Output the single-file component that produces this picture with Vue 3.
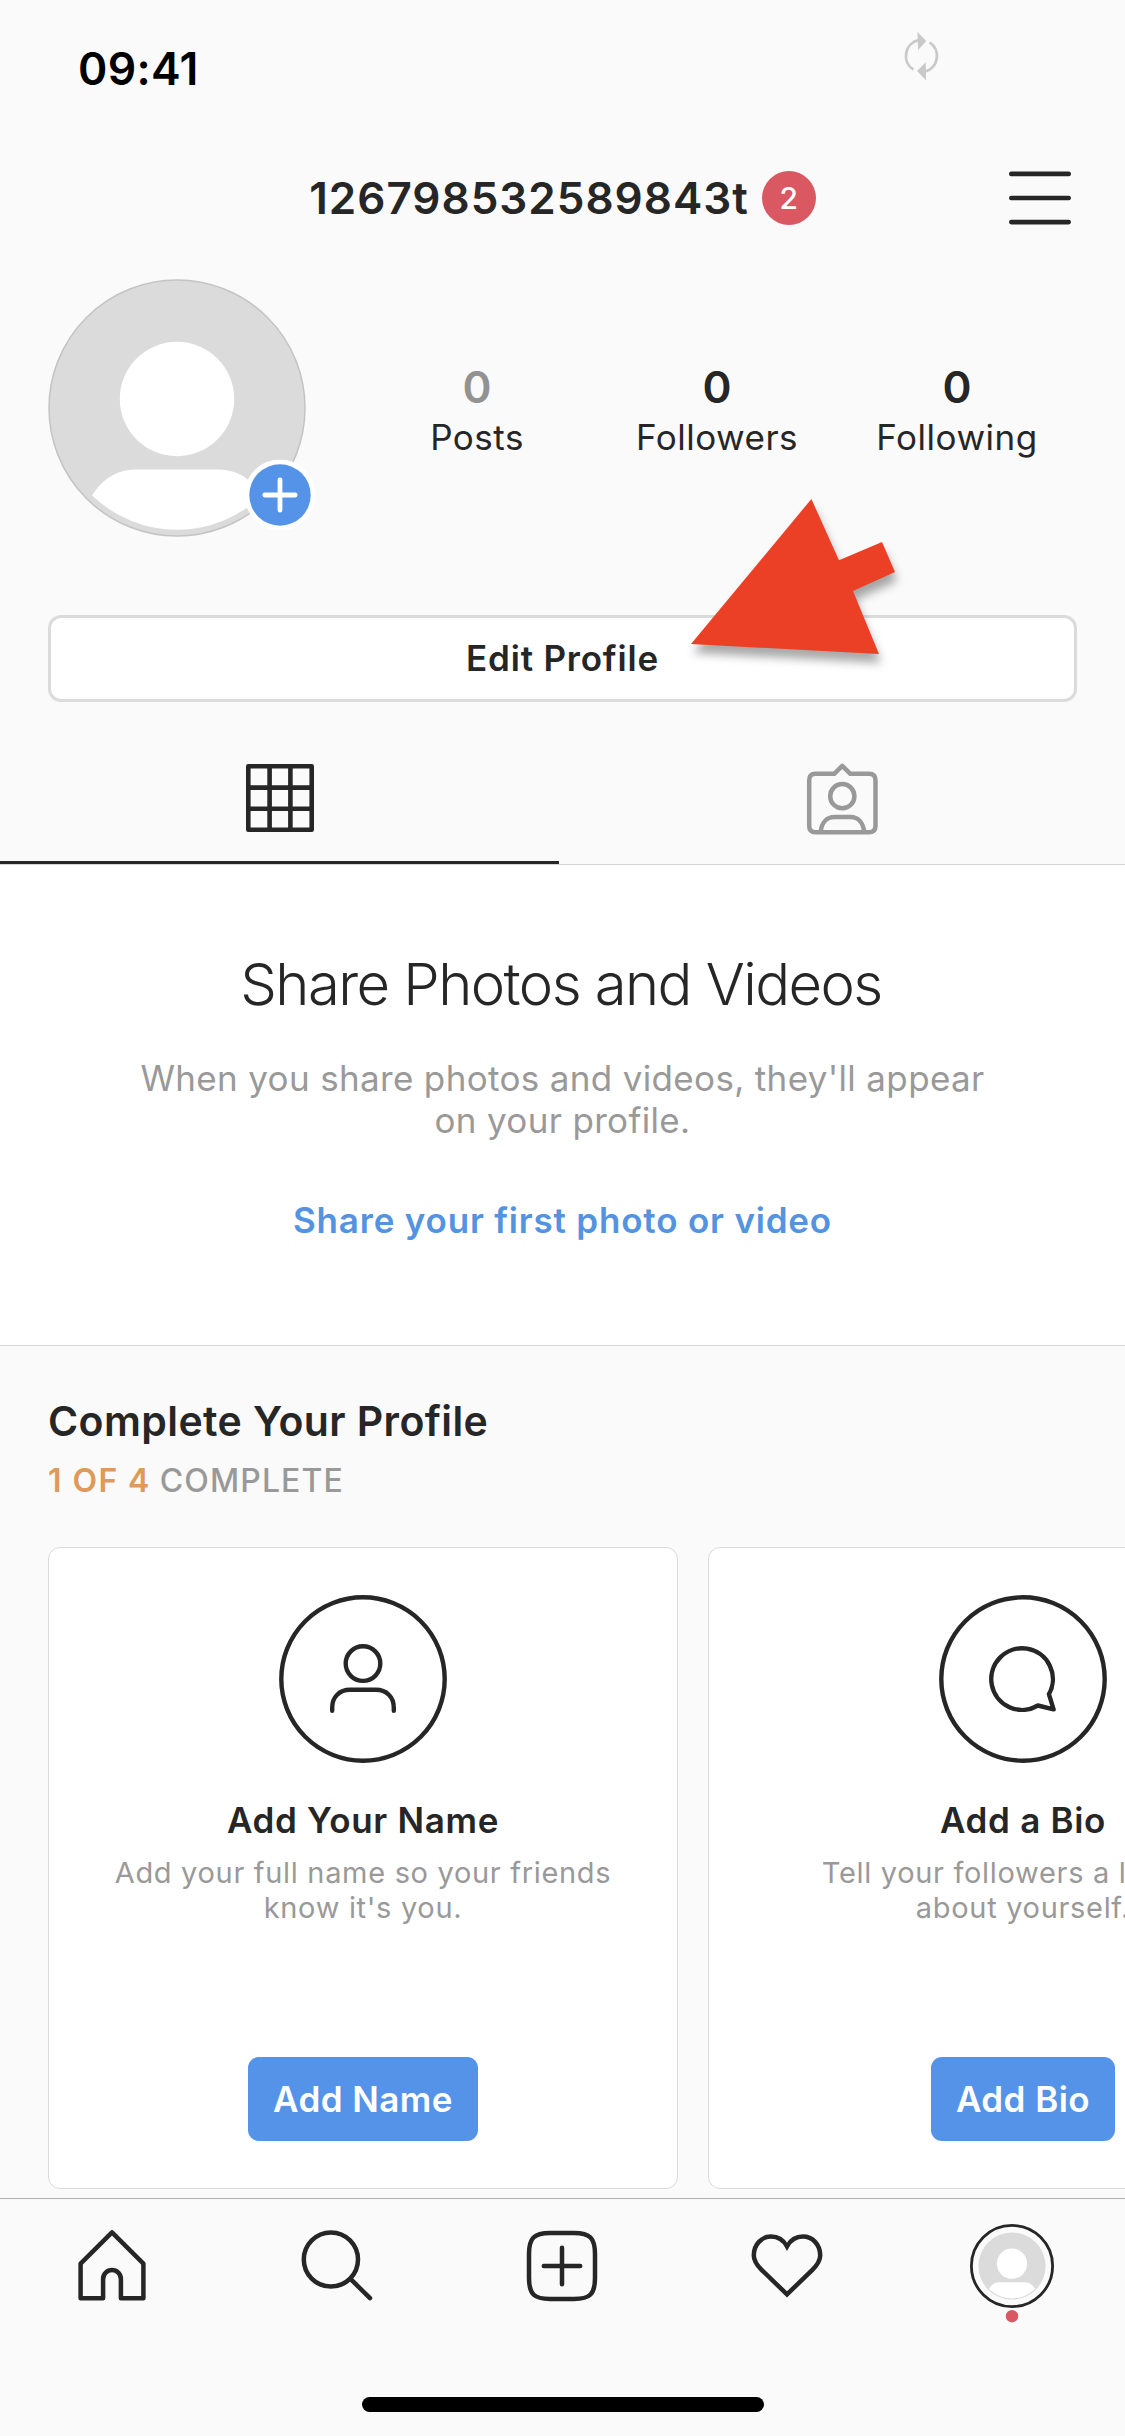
<script setup>
const stats = [
  { label: 'Posts', value: 0, muted: true },
  { label: 'Followers', value: 0 },
  { label: 'Following', value: 0 }
]

const cards = [
  {
    icon: 'person',
    title: 'Add Your Name',
    lines: ['Add your full name so your friends', "know it's you."],
    action: 'Add Name'
  },
  {
    icon: 'bubble',
    title: 'Add a Bio',
    lines: ['Tell your followers a little bit', 'about yourself.'],
    action: 'Add Bio'
  }
]
</script>

<template>
  <div class="screen">
    <div class="status">
      <span class="time">09:41</span>
      <svg class="sync" width="40" height="52" viewBox="902 30 40 52">
        <path d="M913.3 69.6A16.2 16.2 0 0 1 918.6 40.2M929.6 42.4A16.2 16.2 0 0 1 925 71.6" fill="none" stroke="#c9c9c9" stroke-width="2.8" />
        <path d="M917.4 32L926.3 41L918.2 50ZM926 80.2L917 71L925.8 62.2Z" fill="#c9c9c9" />
      </svg>
    </div>

    <header class="header">
      <div class="account">
        <span class="username">126798532589843t</span>
        <span class="count">2</span>
      </div>
      <svg class="menu" width="62" height="54" viewBox="0 0 62 54">
        <path d="M2.3 2.9H59.7M2.3 27H59.7M2.3 51.1H59.7" fill="none" stroke="#262626" stroke-width="4.6" stroke-linecap="round" />
      </svg>
    </header>

    <section class="profile">
      <div class="avatar">
        <svg width="258" height="258" viewBox="48 279 258 258">
          <defs>
            <clipPath id="avatar-clip"><circle cx="177" cy="408" r="121.8" /></clipPath>
          </defs>
          <circle cx="177" cy="408" r="128" fill="#dbdbdb" stroke="#c4c4c4" stroke-width="1.5" />
          <circle cx="177" cy="399" r="57.2" fill="#fff" />
          <path d="M84 510C96 484 112 469.5 136 469.5H218C242 469.5 258 484 270 510V540H84Z" fill="#fff" clip-path="url(#avatar-clip)" />
        </svg>
        <svg class="add" width="72" height="72" viewBox="-36 -36 72 72">
          <circle r="35.6" fill="#fff" />
          <circle r="30.7" fill="#5493e8" />
          <path d="M-15.2 0H15.2M0 -15.2V15.2" stroke="#fff" stroke-width="4.8" stroke-linecap="round" />
        </svg>
      </div>
      <div class="stats">
        <div v-for="s in stats" :key="s.label" class="stat">
          <span class="value" :class="{ muted: s.muted }">{{ s.value }}</span>
          <span class="label">{{ s.label }}</span>
        </div>
      </div>
    </section>

    <div class="edit-wrap">
      <button class="edit">Edit Profile</button>
      <svg class="arrow" width="244" height="200" viewBox="671 479 244 200">
        <path d="M811.4 499L839 560.3L882 542L895 572L853 591L879 654L691 644Z" fill="#eb4026" />
      </svg>
    </div>

    <nav class="tabs">
      <div class="tab active">
        <svg width="68" height="68" viewBox="0 0 68 68">
          <path d="M2.3 2.3H65.7V65.7H2.3ZM23.6 2V66M44.4 2V66M2 23.6H66M2 44.8H66" fill="none" stroke="#262626" stroke-width="4.6" stroke-linejoin="round" />
        </svg>
      </div>
      <div class="tab">
        <svg class="tag" width="72" height="72" viewBox="806 762 72 72">
          <g fill="none" stroke="#999" stroke-width="4.5" stroke-linejoin="round">
            <path d="M815.5 772.8H834.2L842.3 764.8L850.4 772.8H869Q875.5 772.8 875.5 779.3V824.7Q875.5 831.2 869 831.2H815.5Q809.2 831.2 809.2 824.7V779.3Q809.2 772.8 815.5 772.8Z" />
            <circle cx="842.3" cy="795.2" r="12.1" />
            <path d="M820.6 831C821.6 821.5 827 816 834.5 816H850.5C858 816 863.2 821.5 864.2 831" />
          </g>
        </svg>
      </div>
    </nav>

    <section class="empty">
      <h1>Share Photos and Videos</h1>
      <p>When you share photos and videos, they'll appear<br />on your profile.</p>
      <a>Share your first photo or video</a>
    </section>

    <section class="complete">
      <h2>Complete Your Profile</h2>
      <div class="progress"><b>1 OF 4</b><span>COMPLETE</span></div>
      <div class="cards">
        <article v-for="c in cards" :key="c.icon" class="card">
          <svg class="badge" width="168" height="168" viewBox="-84 -84 168 168">
            <g fill="none" stroke="#262626" stroke-width="4.4" stroke-linecap="round" stroke-linejoin="round">
              <circle r="81.7" />
              <template v-if="c.icon === 'person'">
                <circle cy="-15.4" r="17.3" />
                <path d="M-30.8 31.8V28.5C-30.8 18 -23.5 10.8 -13 10.8H13C23.5 10.8 30.8 18 30.8 28.5V31.8" />
              </template>
              <path v-else d="M14.9 26.5A30.8 30.8 0 1 1 25.9 15.2L30.6 30.4Z" />
            </g>
          </svg>
          <h3>{{ c.title }}</h3>
          <p><span v-for="l in c.lines" :key="l">{{ l }}</span></p>
          <button>{{ c.action }}</button>
        </article>
      </div>
    </section>

    <footer class="dock">
      <div class="dock-row">
        <div class="dock-item">
          <svg width="84" height="84" viewBox="-42 -42 84 84">
            <path d="M0 -33.6L31.4 -2.3V32.2H8.9V13A8.9 8.9 0 0 0 -8.9 13V32.2H-31.4V-2.3Z" />
          </svg>
        </div>
        <div class="dock-item">
          <svg width="84" height="84" viewBox="-42 -42 84 84">
            <circle cx="-6.1" cy="-6.5" r="27.1" />
            <path d="M14 13.4L33 32.2" />
          </svg>
        </div>
        <div class="dock-item">
          <svg width="84" height="84" viewBox="-42 -42 84 84">
            <path d="M-33 -12C-33 -28 -28 -33 -12 -33H12C28 -33 33 -28 33 -12V12C33 28 28 33 12 33H-12C-28 33 -33 28 -33 12Z" />
            <path d="M-18.2 0H18.2M0 -18.2V18.2" />
          </svg>
        </div>
        <div class="dock-item">
          <svg width="84" height="84" viewBox="-42 -42 84 84">
            <path stroke-linejoin="miter" d="M0 28.4L-25.4 3.8C-30.6 -1.4 -33.2 -5.2 -33.2 -10.6C-33.2 -21.6 -25.4 -29.4 -15.9 -29.4C-8.6 -29.4 -3.5 -25.8 0 -19.6C3.5 -25.8 8.6 -29.4 15.9 -29.4C25.4 -29.4 33.2 -21.6 33.2 -10.6C33.2 -5.2 30.6 -1.4 25.4 3.8Z" />
          </svg>
        </div>
        <div class="dock-item">
          <svg class="me" width="86" height="100" viewBox="-43 -43 86 100">
            <defs>
              <clipPath id="me-clip"><circle r="32.4" /></clipPath>
            </defs>
            <circle r="40.6" stroke="#262626" stroke-width="2.8" fill="#fafafa" />
            <circle r="33.6" fill="#dbdbdb" />
            <circle cy="-2.3" r="15.1" fill="#fff" />
            <path d="M-25 26C-21 19 -18 16.3 -12 16.3H12C18 16.3 21 19 25 26V40H-25Z" fill="#fff" clip-path="url(#me-clip)" />
            <circle cy="50.2" r="6.2" fill="#d95861" />
          </svg>
        </div>
      </div>
      <div class="home-bar"></div>
    </footer>
  </div>
</template>

<style>
html,
body {
  margin: 0;
  background: #fafafa;
}
</style>

<style scoped>
.screen {
  width: 1125px;
  height: 2436px;
  overflow: hidden;
  display: flex;
  flex-direction: column;
  background: #fafafa;
  color: #262626;
  font-family: Inter, "Liberation Sans", sans-serif;
}

h1, h2, h3, p {
  margin: 0;
}

button {
  font-family: inherit;
  padding: 0;
}

svg {
  display: block;
}

.status {
  height: 136px;
  display: flex;
  justify-content: space-between;
  padding: 0 183px 0 78px;
  box-sizing: border-box;
}

.time {
  margin-top: 42px;
  font-size: 44.5px;
  line-height: 54px;
  font-weight: 600;
  letter-spacing: 0.3px;
  color: #000;
}

.sync {
  margin-top: 30px;
}

.header {
  height: 124px;
  display: grid;
  grid-template-columns: 1fr auto 1fr;
  align-items: center;
  padding: 0 54px;
}

.account {
  grid-column: 2;
  display: flex;
  align-items: center;
  gap: 13px;
}

.username {
  font-size: 44px;
  line-height: 54px;
  font-weight: 600;
  letter-spacing: 1px;
}

.count {
  width: 54px;
  height: 54px;
  border-radius: 50%;
  background: #d95861;
  color: #fff;
  font-size: 30px;
  line-height: 54px;
  font-weight: 500;
  text-align: center;
}

.menu {
  justify-self: end;
  margin-top: -1px;
}

.profile {
  display: flex;
  justify-content: space-between;
  align-items: flex-start;
  height: 336px;
  padding: 19px 48px 0;
}

.avatar {
  position: relative;
}

.add {
  position: absolute;
  left: 195.5px;
  top: 179.5px;
}

.stats {
  display: grid;
  grid-template-columns: repeat(3, 240px);
  padding-top: 82px;
}

.stat {
  display: flex;
  flex-direction: column;
  align-items: center;
  gap: 4px;
}

.value {
  font-size: 44px;
  line-height: 52px;
  font-weight: 600;
}

.muted {
  color: #929292;
}

.label {
  font-size: 35px;
  line-height: 40px;
  letter-spacing: 0.5px;
}

.edit-wrap {
  position: relative;
  padding: 0 48px;
}

.edit {
  display: block;
  width: 100%;
  height: 87px;
  padding-bottom: 2px;
  border: 3px solid #dbdbdb;
  border-radius: 13px;
  background: #fff;
  color: #262626;
  font-size: 35px;
  font-weight: 600;
  letter-spacing: 0.8px;
}

.arrow {
  position: absolute;
  left: 671px;
  top: -136px;
  filter: drop-shadow(2px 9px 5px rgba(0, 0, 0, 0.34));
}

.tabs {
  display: grid;
  grid-template-columns: 559px 1fr;
  margin-top: 30px;
  height: 132px;
  border-bottom: 1px solid #d4d4d4;
}

.tab {
  display: flex;
  justify-content: center;
  align-items: center;
}

.tag {
  margin-top: 2px;
}

.tab.active {
  box-shadow: inset 0 -3px #262626;
}

.empty {
  height: 481px;
  flex: none;
  box-sizing: border-box;
  padding-top: 84px;
  background: #fff;
  border-bottom: 1px solid #d8d8d8;
  display: flex;
  flex-direction: column;
  align-items: center;
  text-align: center;
}

.empty h1 {
  font-size: 58px;
  line-height: 70px;
  font-weight: 300;
  letter-spacing: -1.57px;
  padding-right: 3px;
}

.empty p {
  margin-top: 38px;
  font-size: 35px;
  line-height: 42px;
  letter-spacing: 0.34px;
  color: #999;
}

.empty a {
  margin-top: 58px;
  font-size: 35px;
  line-height: 42px;
  font-weight: 600;
  letter-spacing: 0.81px;
  color: #5493e0;
}

.complete {
  padding: 50px 0 0 48px;
}

.complete h2 {
  font-size: 41px;
  line-height: 50px;
  font-weight: 600;
  letter-spacing: 0.4px;
}

.progress {
  display: flex;
  gap: 9px;
  margin-top: 15px;
  font-size: 32px;
  line-height: 40px;
  letter-spacing: 1.1px;
  font-weight: 500;
  color: #999;
}

.progress b {
  font-weight: 600;
  letter-spacing: 1.4px;
  color: #dd9a5b;
}

.cards {
  display: flex;
  gap: 30px;
  margin-top: 46px;
}

.card {
  width: 630px;
  height: 642px;
  flex: none;
  box-sizing: border-box;
  border: 1px solid #dbdbdb;
  border-radius: 12px;
  background: #fff;
  padding: 47px 0 47px;
  display: flex;
  flex-direction: column;
  align-items: center;
}

.card h3 {
  margin-top: 37px;
  font-size: 35px;
  line-height: 40px;
  font-weight: 600;
  letter-spacing: 0.68px;
}

.card p {
  margin-top: 15px;
  font-size: 29px;
  line-height: 35px;
  letter-spacing: 0.68px;
  color: #999;
  display: flex;
  flex-direction: column;
  align-items: center;
  white-space: nowrap;
}

.card button {
  margin-top: auto;
  height: 84px;
  padding: 0 25px;
  border: 0;
  border-radius: 11px;
  background: #5493e8;
  color: #fff;
  font-size: 35px;
  font-weight: 600;
  letter-spacing: 0.45px;
}

.dock {
  flex: none;
  margin-top: 9px;
  height: 238px;
  box-sizing: border-box;
  border-top: 1px solid #b0b0b0;
  background: #fafafa;
}

.dock-row {
  display: grid;
  grid-template-columns: repeat(5, 225px);
  margin-left: -1px;
  padding-top: 25px;
  height: 174px;
  box-sizing: border-box;
}

.dock-item {
  display: flex;
  justify-content: center;
  align-items: flex-start;
}

.dock-item svg:not(.me) {
  fill: none;
  stroke: #262626;
  stroke-width: 4.5;
  stroke-linecap: round;
  stroke-linejoin: round;
}

.me {
  margin-top: -1px;
}

.home-bar {
  width: 402px;
  height: 15px;
  margin: 24px auto 0;
  border-radius: 8px;
  background: #000;
}
</style>
